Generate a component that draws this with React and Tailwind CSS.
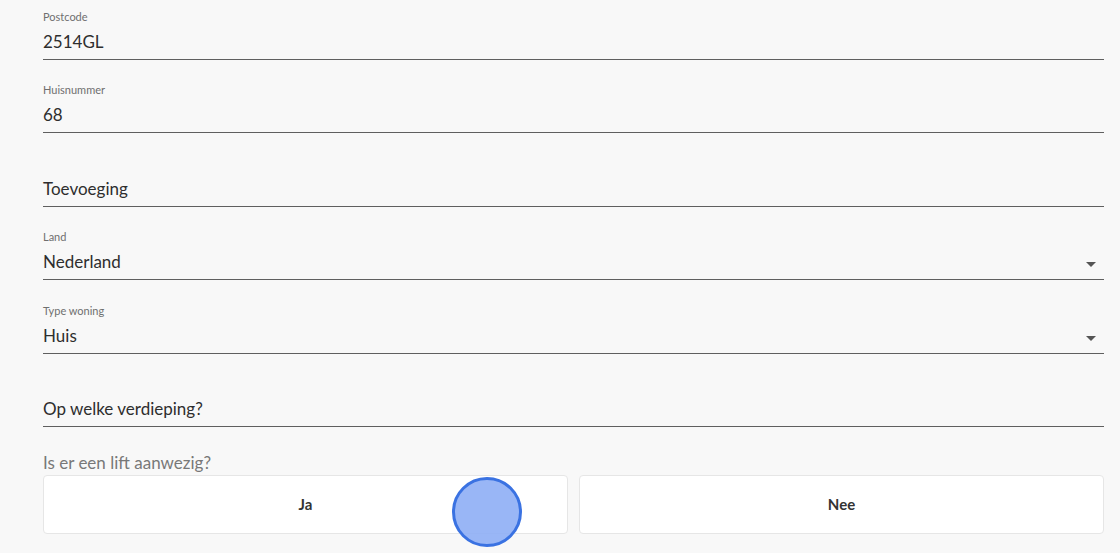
import React from 'react';

const fields = [
  { label: 'Postcode', value: '2514GL' },
  { label: 'Huisnummer', value: '68' },
  { label: '', value: 'Toevoeging' },
  { label: 'Land', value: 'Nederland', select: true },
  { label: 'Type woning', value: 'Huis', select: true },
  { label: '', value: 'Op welke verdieping?' },
];

function Field({ label, value, select }) {
  return (
    <div className="relative h-[60px] flex flex-col justify-end border-b border-[#5f5f5f]">
      <div className="text-[11px] leading-[14px] text-[#6f6f6f] h-[14px]">{label}</div>
      <div className="mt-[6px] mb-[5px] text-[17px] leading-[24px] text-[#2e2e2e]">{value}</div>
      {select && (
        <span className="absolute right-[8px] bottom-[12px] w-0 h-0 border-l-[5px] border-r-[5px] border-t-[5px] border-l-transparent border-r-transparent border-t-[#555]" />
      )}
    </div>
  );
}

export default function App() {
  return (
    <div
      className="relative w-[1120px] h-[553px] overflow-hidden bg-[#f8f8f8] pl-[43px] pr-[16px]"
      style={{ fontFamily: 'Lato, Inter, sans-serif' }}
    >
      <div className="flex flex-col gap-[13.4px]">
        {fields.map((f) => (
          <Field key={f.value} {...f} />
        ))}
      </div>

      <div className="mt-[25px] text-[17px] leading-[22px] text-[#787878]">Is er een lift aanwezig?</div>
      <div className="mt-[1px] grid grid-cols-2 gap-[11px]">
        <button className="h-[59px] rounded-[4px] border border-[#e6e6e6] bg-white text-[15px] font-bold text-[#333]">
          Ja
        </button>
        <button className="h-[59px] rounded-[4px] border border-[#e6e6e6] bg-white text-[15px] font-bold text-[#333]">
          Nee
        </button>
      </div>

      {/* click indicator */}
      <div className="absolute left-[452px] top-[477px] w-[70px] h-[70px] rounded-full border-[3px] border-[#3a72e2] bg-[#8eaef5]/90" />
    </div>
  );
}
